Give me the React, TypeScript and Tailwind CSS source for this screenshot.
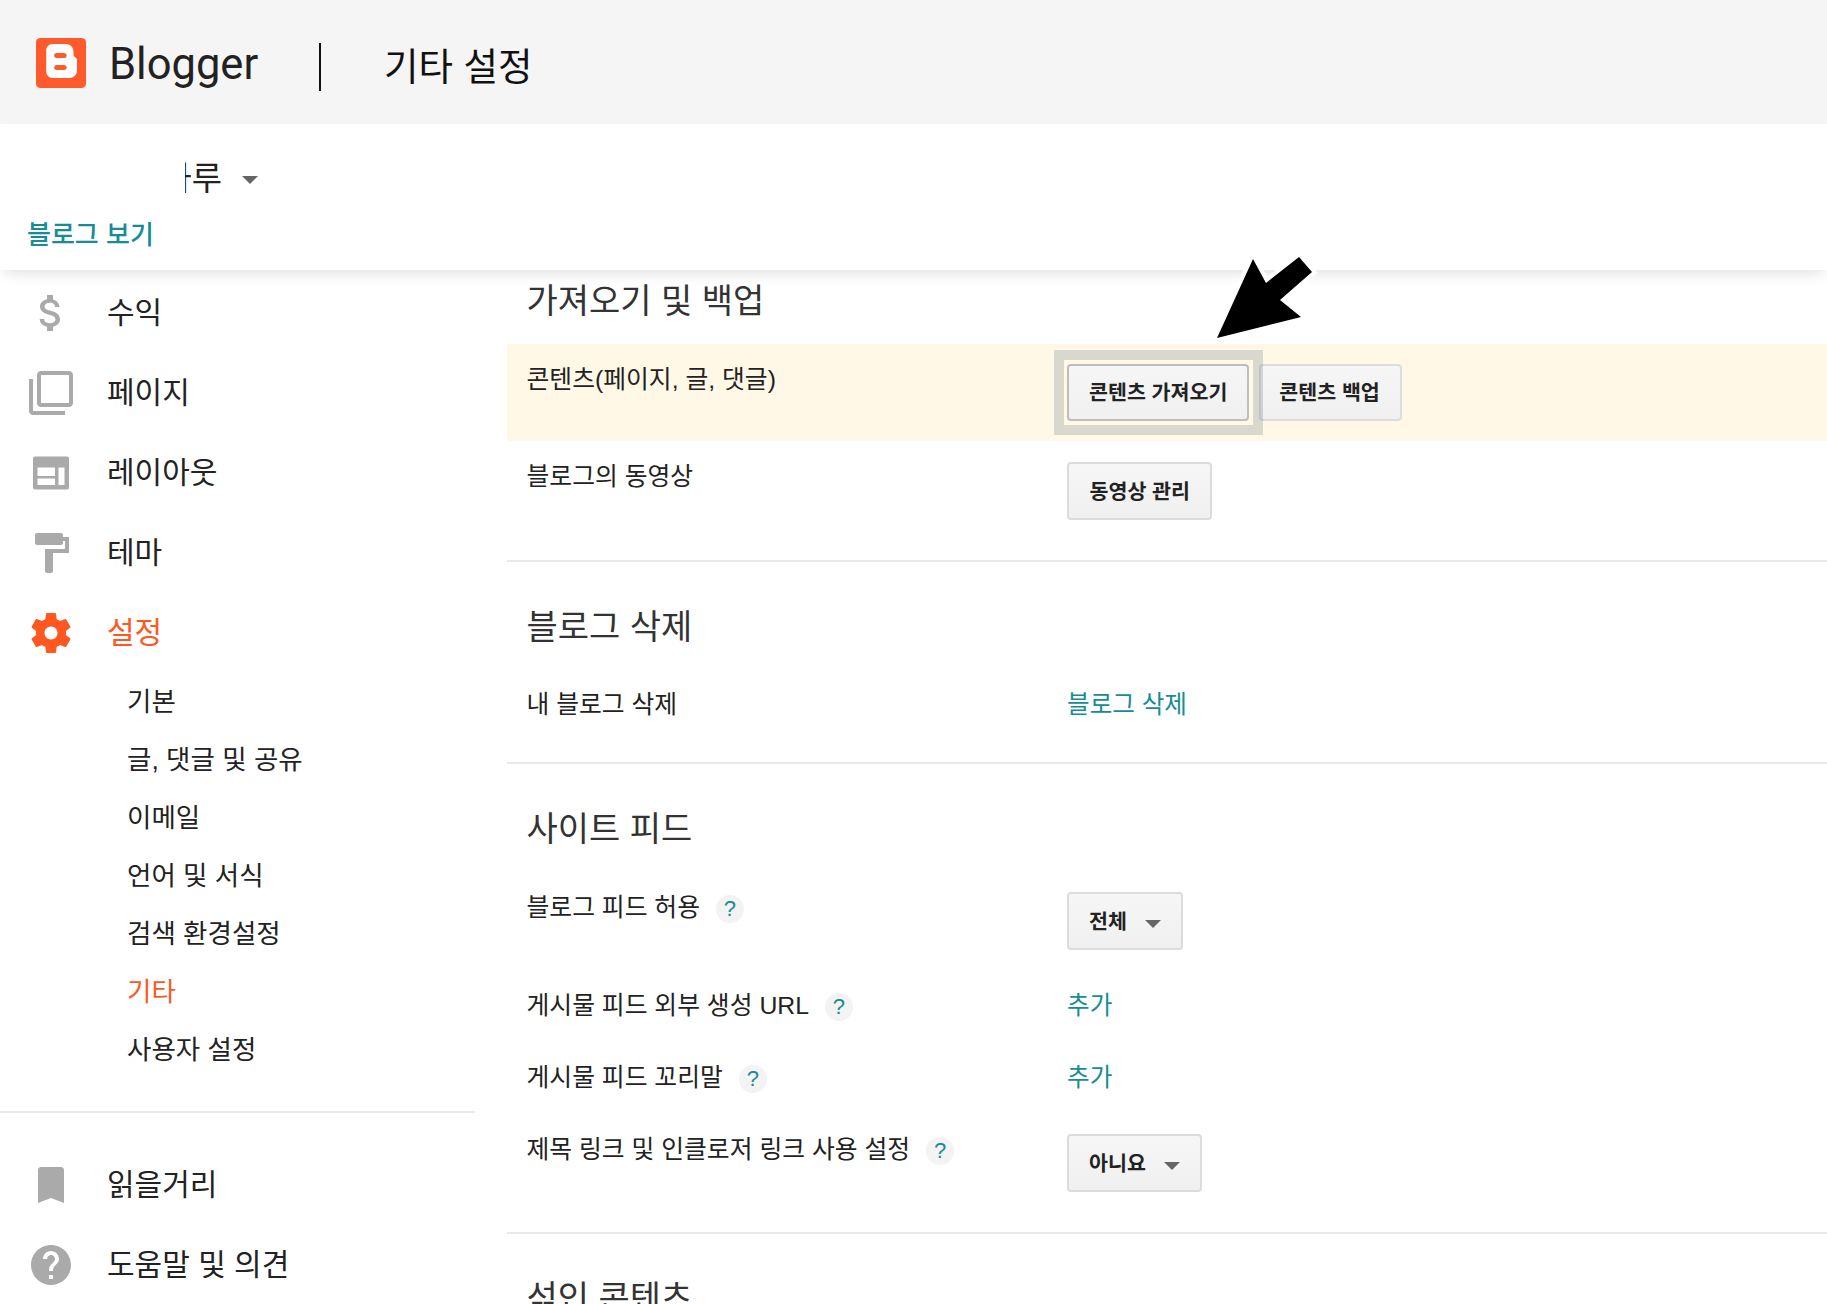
import type { ReactNode } from 'react';

const ICONS = {
  money:
    'M11.8 10.9c-2.27-.59-3-1.2-3-2.15 0-1.09 1.01-1.85 2.7-1.85 1.78 0 2.44.85 2.5 2.1h2.21c-.07-1.72-1.12-3.3-3.21-3.81V3h-3v2.16c-1.94.42-3.5 1.68-3.5 3.61 0 2.31 1.91 3.46 4.7 4.13 2.5.6 3 1.48 3 2.41 0 .69-.49 1.79-2.7 1.79-2.06 0-2.87-.92-2.98-2.1h-2.2c.12 2.19 1.76 3.42 3.68 3.83V21h3v-2.15c1.95-.37 3.5-1.5 3.5-3.55 0-2.84-2.43-3.81-4.7-4.4z',
  pages:
    'M3 5H1v16c0 1.1.9 2 2 2h16v-2H3V5zm18-4H7c-1.1 0-2 .9-2 2v14c0 1.1.9 2 2 2h14c1.1 0 2-.9 2-2V3c0-1.1-.9-2-2-2zm0 16H7V3h14v14z',
  layout:
    'M4 3.75h16a1 1 0 0 1 1 1v14.5a1 1 0 0 1-1 1H4a1 1 0 0 1-1-1V4.75a1 1 0 0 1 1-1zM5.25 9.25V13.5H14V9.25zM5.25 14.75V18H14v-3.25zM15.75 9.25V18h3V9.25z',
  theme:
    'M18 4V3c0-.55-.45-1-1-1H5c-.55 0-1 .45-1 1v4c0 .55.45 1 1 1h12c.55 0 1-.45 1-1V6h1v4H9v11c0 .55.45 1 1 1h2c.55 0 1-.45 1-1v-9h8V4h-3z',
  settings:
    'M19.43 12.98c.04-.32.07-.64.07-.98s-.03-.66-.07-.98l2.11-1.65c.19-.15.24-.42.12-.64l-2-3.46c-.12-.22-.39-.3-.61-.22l-2.49 1c-.52-.4-1.08-.73-1.69-.98l-.38-2.65C14.46 2.18 14.25 2 14 2h-4c-.25 0-.46.18-.49.42l-.38 2.65c-.61.25-1.17.59-1.69.98l-2.49-1c-.23-.09-.49 0-.61.22l-2 3.46c-.13.22-.07.49.12.64l2.11 1.65c-.04.32-.07.65-.07.98s.03.66.07.98l-2.11 1.65c-.19.15-.24.42-.12.64l2 3.46c.12.22.39.3.61.22l2.49-1c.52.4 1.08.73 1.69.98l.38 2.65c.03.24.24.42.49.42h4c.25 0 .46-.18.49-.42l.38-2.65c.61-.25 1.17-.59 1.69-.98l2.49 1c.23.09.49 0 .61-.22l2-3.46c.12-.22.07-.49-.12-.64l-2.11-1.65zM12 15.25c-1.79 0-3.25-1.46-3.25-3.25s1.46-3.25 3.25-3.25 3.25 1.46 3.25 3.25-1.46 3.25-3.25 3.25z',
  bookmark: 'M17 3H7c-.6 0-1.5.4-1.5 1.5V21l6.5-2.5 6.5 2.5V4.500C18.500 3.400 17.600 3 17 3z',
  help:
    'M12 2C6.48 2 2 6.48 2 12s4.48 10 10 10 10-4.48 10-10S17.52 2 12 2zm1 17h-2v-2h2v2zm2.07-7.75l-.9.92C13.45 12.9 13 13.5 13 15h-2v-.5c0-1.1.45-2.1 1.17-2.83l1.24-1.26c.37-.36.59-.86.59-1.41 0-1.1-.9-2-2-2s-2 .9-2 2H8c0-2.21 1.79-4 4-4s4 1.79 4 4c0 .88-.36 1.68-.93 2.25z',
};

function NavItem({ icon, label, active }: { icon: keyof typeof ICONS; label: string; active?: boolean }) {
  return (
    <div className="flex items-center h-[80px] pl-[27px] gap-[32px]">
      <svg viewBox="0 0 24 24" fillRule="evenodd" className={`w-[48px] h-[48px] shrink-0 ${active ? 'fill-[#ff5722]' : 'fill-[#aaaaaa]'}`}>
        <path d={ICONS[icon]} />
      </svg>
      <span className={`text-[30px] leading-[40px] ${active ? 'text-[#ff5722]' : 'text-[#222222]'}`}>{label}</span>
    </div>
  );
}

function SubItem({ label, active }: { label: string; active?: boolean }) {
  return (
    <div className={`h-[58px] pl-[127px] pt-[2px] flex items-center text-[26.500px] ${active ? 'text-[#ff5722]' : 'text-[#222222]'}`}>
      {label}
    </div>
  );
}

function Btn({ children, className }: { children: ReactNode; className: string }) {
  return (
    <div
      className={`flex items-center rounded-[4px] border-2 bg-gradient-to-b from-[#f6f6f6] to-[#f0f0f0] text-[20.600px] font-bold text-[#222222] ${className}`}
    >
      {children}
    </div>
  );
}

function Select({ label }: { label: string }) {
  return (
    <Btn className="h-[58px] -mt-[1px] px-[20px] pt-[3px] border-[#dcdcdc]">
      {label}
      <span className="ml-[18px] mt-[2px] w-0 h-0 border-x-[8px] border-x-transparent border-t-[8px] border-t-[#666666]" />
    </Btn>
  );
}

function Help() {
  return (
    <span className="ml-[16px] w-[28px] h-[28px] mt-[2px] rounded-full bg-[#f3f3f3] text-[#168c96] text-[22px] flex items-center justify-center">
      ?
    </span>
  );
}

function Row({ label, help, className, children }: { label: string; help?: boolean; className: string; children: ReactNode }) {
  return (
    <div className={`flex pl-[19.500px] ${className}`}>
      <div className="w-[540.500px] shrink-0 flex items-start text-[24.800px] leading-[30px] text-[#222222]">
        {label}
        {help && <Help />}
      </div>
      <div className="flex items-start">{children}</div>
    </div>
  );
}

function Heading({ children, className }: { children: ReactNode; className: string }) {
  return <h2 className={`pl-[19.500px] text-[34px] leading-[44px] font-normal text-[#333333] ${className}`}>{children}</h2>;
}

function TextLink({ children }: { children: ReactNode }) {
  return <span className="text-[24.600px] leading-[30px] text-[#168c96]">{children}</span>;
}

export default function App() {
  return (
    <div className="relative w-[1827px] h-[1304px] overflow-hidden bg-white font-['Liberation_Sans','Noto_Sans_CJK_KR',sans-serif]">
      <header className="h-[124px] bg-[#f5f5f5] flex items-center pl-[36px]">
        <svg viewBox="0 0 44 50" preserveAspectRatio="none" className="w-[50px] h-[50px] shrink-0 mt-[2px]">
          <rect width="44" height="50" rx="4" fill="#ff5a2c" />
          <path d="M15 6H26C31 6 33 10 33 14V17C33 19 36 19 36 22V33C36 37 33 40 29 40H15C11 40 9 37 9 33V13C9 9 11 6 15 6Z" fill="#fff" />
          <rect x="16" y="15" width="11" height="5" rx="2.500" fill="#ff5a2c" />
          <rect x="16" y="27" width="11" height="5" rx="2.500" fill="#ff5a2c" />
        </svg>
        <span className="ml-[23px] w-[210px] mt-[5px] font-['Roboto',sans-serif] text-[43.500px] text-[#222222]">Blogger</span>
        <span className="w-[2px] h-[48px] bg-[#111111] mt-[9px]" />
        <span className="ml-[63px] mt-[11px] text-[37.500px] text-[#111111]">기타 설정</span>
      </header>

      <div className="relative z-10 h-[146px] bg-white shadow-[0_6px_14px_-4px_rgba(0,0,0,0.14)] pt-[30px]">
        <div className="flex items-center pl-[185px] h-[50px]">
          <div className="w-[37px] overflow-hidden flex justify-end text-[33px] text-[#222222] whitespace-nowrap">하루</div>
          <span className="ml-[20px] mt-[2px] w-0 h-0 border-x-[8px] border-x-transparent border-t-[8px] border-t-[#666666]" />
        </div>
        <div className="pl-[27px] mt-[15px] text-[26px] leading-[32px] font-medium text-[#168c96]">블로그 보기</div>
      </div>

      <div className="flex">
        <aside className="w-[475px] shrink-0 mt-[3px]">
          <NavItem icon="money" label="수익" />
          <NavItem icon="pages" label="페이지" />
          <NavItem icon="layout" label="레이아웃" />
          <NavItem icon="theme" label="테마" />
          <NavItem icon="settings" label="설정" active />
          <SubItem label="기본" />
          <SubItem label="글, 댓글 및 공유" />
          <SubItem label="이메일" />
          <SubItem label="언어 및 서식" />
          <SubItem label="검색 환경설정" />
          <SubItem label="기타" active />
          <SubItem label="사용자 설정" />
          <div className="h-[2px] bg-[#ebebeb] mt-[32px] mb-[32px]" />
          <NavItem icon="bookmark" label="읽을거리" />
          <NavItem icon="help" label="도움말 및 의견" />
        </aside>

        <main className="ml-[32px] flex-1 min-w-0">
          <section className="border-b-2 border-[#e8e8e8]">
            <Heading className="h-[74px] pt-[9px]">가져오기 및 백업</Heading>
            <Row label="콘텐츠(페이지, 글, 댓글)" className="h-[97px] pt-[21px] bg-[#fff8e6]">
              <div className="flex gap-[10px] -mt-[1px]">
                <div className="relative">
                  <Btn className="h-[57px] px-[20px] pt-[2px] border-[#bdbdbd]">콘텐츠 가져오기</Btn>
                  <span className="absolute z-10 -left-[13px] -right-[14px] -top-[14px] -bottom-[14px] border-[10px] border-[rgba(99,120,126,0.25)]" />
                </div>
                <Btn className="h-[57px] pl-[18px] pr-[20px] pt-[2px] border-[#dcdcdc]">콘텐츠 백업</Btn>
              </div>
            </Row>
            <Row label="블로그의 동영상" className="h-[119px] pt-[21px]">
              <Btn className="h-[58px] px-[20.500px] pt-[2px] border-[#dcdcdc]">동영상 관리</Btn>
            </Row>
          </section>

          <section className="border-b-2 border-[#e8e8e8]">
            <Heading className="pt-[43px] mb-[41px]">블로그 삭제</Heading>
            <Row label="내 블로그 삭제" className="h-[72px]">
              <TextLink>블로그 삭제</TextLink>
            </Row>
          </section>

          <section className="border-b-2 border-[#e8e8e8]">
            <Heading className="pt-[43px] mb-[42px]">사이트 피드</Heading>
            <Row label="블로그 피드 허용" help className="h-[98px]">
              <Select label="전체" />
            </Row>
            <Row label="게시물 피드 외부 생성 URL" help className="h-[72px]">
              <TextLink>추가</TextLink>
            </Row>
            <Row label="게시물 피드 꼬리말" help className="h-[72px]">
              <TextLink>추가</TextLink>
            </Row>
            <Row label="제목 링크 및 인클로저 링크 사용 설정" help className="h-[97px]">
              <Select label="아니요" />
            </Row>
          </section>

          <Heading className="pt-[42px]">섞인 콘텐츠</Heading>
        </main>
      </div>

      {/* annotation arrow on top of the screenshot */}
      <svg className="absolute left-[1190px] top-[235px] w-[140px] h-[125px] z-20" viewBox="1190 235 140 125">
        <polygon
          points="1217,338 1253,259 1266,283 1299,257 1312,272 1280,300 1301,317"
          fill="#000"
          stroke="#fff"
          strokeWidth="8"
          paintOrder="stroke"
          strokeLinejoin="miter"
          strokeMiterlimit="6"
        />
      </svg>
    </div>
  );
}
